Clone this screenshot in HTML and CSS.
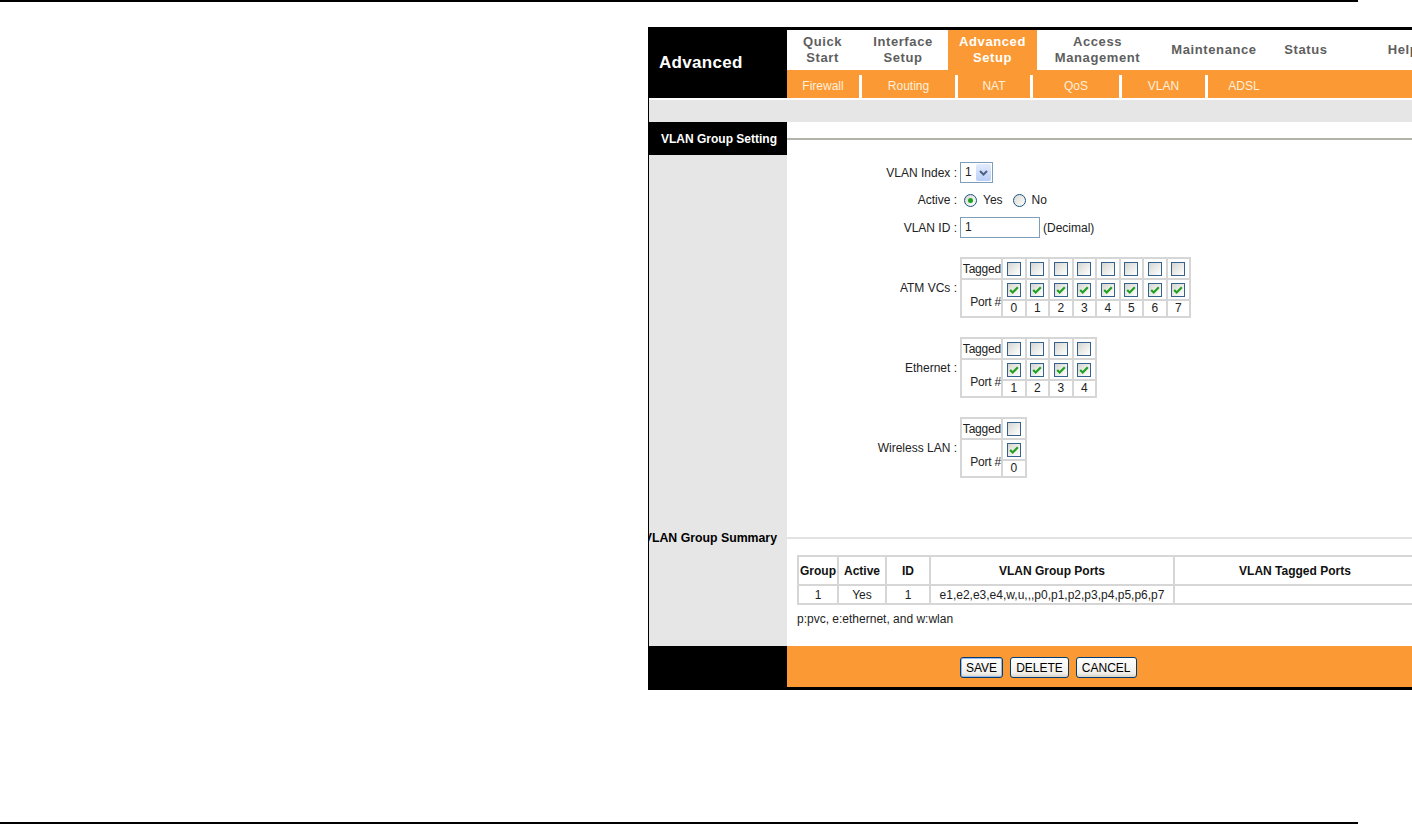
FILE: index.html
```html
<!DOCTYPE html>
<html lang="en">
<head>
    <meta charset="UTF-8">
    <title>Advanced Setup - VLAN</title>
    <link rel="stylesheet" href="styles.css">
</head>
<body>
<div class="page">
    <div class="rule"></div>

    <div class="shot">
        <div class="app">
            <!-- cabecera -->
            <div class="head">
                <div class="brand">Advanced</div>
                <div class="nav">
                    <div class="tabs">
                        <div class="tab">Quick<br>Start</div>
                        <div class="tab">Interface<br>Setup</div>
                        <div class="tab on">Advanced<br>Setup</div>
                        <div class="tab">Access<br>Management</div>
                        <div class="tab">Maintenance</div>
                        <div class="tab">Status</div>
                        <div class="tab">Help</div>
                    </div>
                    <div class="subnav">
                        <span>Firewall</span><span class="sep"></span>
                        <span>Routing</span><span class="sep"></span>
                        <span>NAT</span><span class="sep"></span>
                        <span>QoS</span><span class="sep"></span>
                        <span>VLAN</span><span class="sep"></span>
                        <span>ADSL</span>
                    </div>
                </div>
            </div>
            <div class="band"></div>

            <div class="body">
                <!-- VLAN Group Setting -->
                <div class="side dark title">VLAN Group Setting</div>
                <div class="main hr-cell"><div class="hr"></div></div>

                <div class="side"></div>
                <div class="main form">
                    <div class="row">
                        <label>VLAN Index :</label>
                        <div class="select">
                            <span>1</span>
                            <span class="arrow">
                                <svg width="9" height="6" viewBox="0 0 9 6"><path d="M1 1 L4.5 4.5 L8 1" fill="none" stroke="#4d6185" stroke-width="2"/></svg>
                            </span>
                        </div>
                    </div>
                    <div class="row">
                        <label>Active :</label>
                        <div class="opts">
                            <i class="radio on"></i><span>Yes</span>
                            <i class="radio"></i><span>No</span>
                        </div>
                    </div>
                    <div class="row">
                        <label>VLAN ID :</label>
                        <div class="opts">
                            <div class="text">1</div><span class="hint">(Decimal)</span>
                        </div>
                    </div>

                    <div class="row ports-row">
                        <label>ATM VCs :</label>
                        <table class="ports">
                            <tr>
                                <td class="lbl">Tagged</td>
                                <td><i class="cb"></i></td><td><i class="cb"></i></td><td><i class="cb"></i></td><td><i class="cb"></i></td>
                                <td><i class="cb"></i></td><td><i class="cb"></i></td><td><i class="cb"></i></td><td><i class="cb"></i></td>
                            </tr>
                            <tr>
                                <td class="lbl port" rowspan="2">Port #</td>
                                <td><i class="cb"><svg viewBox="0 0 11 11"><path d="M2 5.5 L4.3 7.8 L9 3" fill="none" stroke="#21a121" stroke-width="2"/></svg></i></td>
                                <td><i class="cb"><svg viewBox="0 0 11 11"><path d="M2 5.5 L4.3 7.8 L9 3" fill="none" stroke="#21a121" stroke-width="2"/></svg></i></td>
                                <td><i class="cb"><svg viewBox="0 0 11 11"><path d="M2 5.5 L4.3 7.8 L9 3" fill="none" stroke="#21a121" stroke-width="2"/></svg></i></td>
                                <td><i class="cb"><svg viewBox="0 0 11 11"><path d="M2 5.5 L4.3 7.8 L9 3" fill="none" stroke="#21a121" stroke-width="2"/></svg></i></td>
                                <td><i class="cb"><svg viewBox="0 0 11 11"><path d="M2 5.5 L4.3 7.8 L9 3" fill="none" stroke="#21a121" stroke-width="2"/></svg></i></td>
                                <td><i class="cb"><svg viewBox="0 0 11 11"><path d="M2 5.5 L4.3 7.8 L9 3" fill="none" stroke="#21a121" stroke-width="2"/></svg></i></td>
                                <td><i class="cb"><svg viewBox="0 0 11 11"><path d="M2 5.5 L4.3 7.8 L9 3" fill="none" stroke="#21a121" stroke-width="2"/></svg></i></td>
                                <td><i class="cb"><svg viewBox="0 0 11 11"><path d="M2 5.5 L4.3 7.8 L9 3" fill="none" stroke="#21a121" stroke-width="2"/></svg></i></td>
                            </tr>
                            <tr class="num">
                                <td>0</td><td>1</td><td>2</td><td>3</td><td>4</td><td>5</td><td>6</td><td>7</td>
                            </tr>
                        </table>
                    </div>

                    <div class="row ports-row">
                        <label>Ethernet :</label>
                        <table class="ports">
                            <tr>
                                <td class="lbl">Tagged</td>
                                <td><i class="cb"></i></td><td><i class="cb"></i></td><td><i class="cb"></i></td><td><i class="cb"></i></td>
                            </tr>
                            <tr>
                                <td class="lbl port" rowspan="2">Port #</td>
                                <td><i class="cb"><svg viewBox="0 0 11 11"><path d="M2 5.5 L4.3 7.8 L9 3" fill="none" stroke="#21a121" stroke-width="2"/></svg></i></td>
                                <td><i class="cb"><svg viewBox="0 0 11 11"><path d="M2 5.5 L4.3 7.8 L9 3" fill="none" stroke="#21a121" stroke-width="2"/></svg></i></td>
                                <td><i class="cb"><svg viewBox="0 0 11 11"><path d="M2 5.5 L4.3 7.8 L9 3" fill="none" stroke="#21a121" stroke-width="2"/></svg></i></td>
                                <td><i class="cb"><svg viewBox="0 0 11 11"><path d="M2 5.5 L4.3 7.8 L9 3" fill="none" stroke="#21a121" stroke-width="2"/></svg></i></td>
                            </tr>
                            <tr class="num">
                                <td>1</td><td>2</td><td>3</td><td>4</td>
                            </tr>
                        </table>
                    </div>

                    <div class="row ports-row">
                        <label>Wireless LAN :</label>
                        <table class="ports">
                            <tr>
                                <td class="lbl">Tagged</td>
                                <td><i class="cb"></i></td>
                            </tr>
                            <tr>
                                <td class="lbl port" rowspan="2">Port #</td>
                                <td><i class="cb"><svg viewBox="0 0 11 11"><path d="M2 5.5 L4.3 7.8 L9 3" fill="none" stroke="#21a121" stroke-width="2"/></svg></i></td>
                            </tr>
                            <tr class="num">
                                <td>0</td>
                            </tr>
                        </table>
                    </div>
                </div>

                <!-- VLAN Group Summary -->
                <div class="side title sum-title">VLAN Group Summary</div>
                <div class="main hr-cell"><div class="hr light"></div></div>

                <div class="side"></div>
                <div class="main summary">
                    <table class="sum">
                        <tr>
                            <th class="c-group">Group</th>
                            <th class="c-active">Active</th>
                            <th class="c-id">ID</th>
                            <th class="c-ports">VLAN Group Ports</th>
                            <th>VLAN Tagged Ports</th>
                        </tr>
                        <tr>
                            <td>1</td>
                            <td>Yes</td>
                            <td>1</td>
                            <td>e1,e2,e3,e4,w,u,,,p0,p1,p2,p3,p4,p5,p6,p7</td>
                            <td></td>
                        </tr>
                    </table>
                    <p class="note">p:pvc, e:ethernet, and w:wlan</p>
                </div>

                <!-- botones -->
                <div class="side dark foot-side"></div>
                <div class="main foot">
                    <button class="btn default">SAVE</button>
                    <button class="btn">DELETE</button>
                    <button class="btn">CANCEL</button>
                </div>
            </div>
        </div>
    </div>

    <div class="rule bottom"></div>
</div>
</body>
</html>
```

FILE: styles.css
```css
/* pagina del manual */
body {
    margin: 0;
    background: #fff;
    font-family: "Liberation Sans", Arial, sans-serif;
    color: #222;
}

.page {
    height: 825px;
    display: flex;
    flex-direction: column;
}

.rule {
    width: 1358px;
    height: 2px;
    background: #000;
    flex: none;
}
.rule.bottom {
    margin-top: auto;
    margin-bottom: 1px;
}

/* captura del router */
.shot {
    margin: 25px 0 0 648px;
    width: 764px;
    overflow: hidden;
    border-top: 3px solid #000;
    border-bottom: 3px solid #000;
    border-left: 1px solid #000;
    box-sizing: border-box;
}
.app {
    width: 815px;
}

.head {
    display: flex;
}
.brand {
    width: 138px;
    height: 68px;
    flex: none;
    background: #000;
    color: #fff;
    display: flex;
    align-items: center;
    padding: 0 0 2px 10px;
    box-sizing: border-box;
    font-size: 17px;
    font-weight: 600;
    letter-spacing: 0.3px;
}
.nav {
    flex: 1;
}
.tabs {
    display: grid;
    grid-template-columns: 71px 90px 89px 121px 112px 72px 1fr;
    height: 40px;
}
.tab {
    display: flex;
    align-items: center;
    justify-content: center;
    text-align: center;
    font-size: 13px;
    line-height: 16px;
    font-weight: bold;
    letter-spacing: 0.6px;
    color: #5e5e5e;
}
.tab.on {
    background: #fb9a35;
    color: #fff;
}
.subnav {
    display: grid;
    grid-template-columns: 72px 3px 93px 3px 72px 3px 86px 3px 83px 3px 72px 1fr;
    height: 28px;
    background: #fb9a35;
}
.subnav span {
    display: flex;
    align-items: center;
    justify-content: center;
    padding-top: 3px;
    font-size: 12px;
    color: #ffefdc;
}
.subnav .sep {
    align-self: end;
    height: 23px;
    padding: 0;
    background: #fff;
}

.band {
    height: 22px;
    margin-top: 2px;
    background: #e6e6e6;
}

/* cuerpo en dos columnas */
.body {
    display: grid;
    grid-template-columns: 138px 1fr;
}
.side {
    background: #e6e6e6;
}
.side.dark {
    background: #000;
    color: #fff;
}
.title {
    height: 33px;
    display: flex;
    justify-content: flex-end;
    align-items: center;
    padding-right: 10px;
    white-space: nowrap;
    font-size: 12px;
    font-weight: bold;
}
.sum-title {
    height: 20px;
    color: #000;
    font-size: 12.3px;
}
.hr-cell {
    display: flex;
    align-items: center;
}
.hr {
    width: 100%;
    height: 2px;
    background: #b3b3ab;
}
.hr.light {
    background: #e2e2e2;
}

/* formulario */
.form {
    padding: 7px 0 50px;
    font-size: 12px;
}
.row {
    display: grid;
    grid-template-columns: 170px auto;
    column-gap: 3px;
    align-items: center;
    justify-content: start;
    min-height: 20px;
}
.row + .row {
    margin-top: 7px;
}
.row.ports-row {
    margin-top: 19px;
}
.row label {
    text-align: right;
}
.select {
    display: flex;
    width: 33px;
    height: 21px;
    border: 1px solid #7f9db9;
    box-sizing: border-box;
    background: #fff;
}
.select span:first-child {
    padding-left: 4px;
    line-height: 19px;
}
.arrow {
    margin: 1px 1px 1px auto;
    width: 15px;
    display: flex;
    align-items: center;
    justify-content: center;
    border-radius: 2px;
    background: linear-gradient(#e3ecfd, #b9cff8);
}
.opts {
    display: flex;
    align-items: center;
}
.radio {
    width: 13px;
    height: 13px;
    margin-left: 4px;
    border-radius: 50%;
    border: 1px solid #1c5180;
    box-sizing: border-box;
    background: linear-gradient(135deg, #d8d8d2, #fff);
    display: flex;
    align-items: center;
    justify-content: center;
}
.radio.on::after {
    content: "";
    width: 5px;
    height: 5px;
    border-radius: 50%;
    background: #21a121;
}
.opts span {
    margin-left: 6px;
    margin-right: 6px;
}
.text {
    width: 80px;
    height: 21px;
    border: 1px solid #7f9db9;
    box-sizing: border-box;
    padding-left: 4px;
    line-height: 19px;
}
.hint {
    margin-left: 3px !important;
}

.ports {
    border-collapse: collapse;
    border: 2px solid #d6d6d6;
    font-size: 12px;
}
.ports td {
    border: 2px solid #d6d6d6;
    padding: 0;
    width: 21.5px;
    height: 19px;
    text-align: center;
}
.ports td.lbl {
    width: 39px;
    text-align: right;
    letter-spacing: -0.2px;
}
.ports td.port {
    vertical-align: bottom;
    padding-bottom: 7px;
}
.ports .num td {
    height: 15px;
    line-height: 15px;
}
.cb {
    display: inline-block;
    vertical-align: middle;
    width: 14px;
    height: 14px;
    border: 1px solid #33628f;
    box-sizing: border-box;
    background: linear-gradient(135deg, #d6d6d0, #fff);
}
.cb svg {
    display: block;
    width: 12px;
    height: 12px;
}

/* resumen */
.summary {
    padding: 7px 0 0 10px;
    height: 98px;
    box-sizing: border-box;
    font-size: 12px;
}
.sum {
    width: 620px;
    border-collapse: collapse;
    border: 2px solid #d6d6d6;
}
.sum th,
.sum td {
    border: 2px solid #d6d6d6;
    padding: 0;
    text-align: center;
}
.sum th {
    height: 27px;
    font-weight: bold;
    color: #111;
}
.sum td {
    height: 17px;
}
.c-group { width: 38px; }
.c-active { width: 46px; }
.c-id { width: 42px; }
.c-ports { width: 242px; }
.note {
    margin: 7px 0 0;
}

/* pie con botones */
.foot-side {
    height: 41px;
}
.foot {
    background: #fb9a35;
    display: flex;
    align-items: center;
    gap: 7px;
    padding: 2px 0 0 173px;
    box-sizing: border-box;
}
.btn {
    height: 21px;
    padding: 0 5px;
    font-family: "Liberation Sans", Arial, sans-serif;
    font-size: 12px;
    color: #000;
    border: 1px solid #003c74;
    border-radius: 3px;
    background: linear-gradient(#fff, #f0efea 80%, #d8d2c6);
}
.btn.default {
    box-shadow: inset 0 0 0 1px #9ab8e8;
}
```
